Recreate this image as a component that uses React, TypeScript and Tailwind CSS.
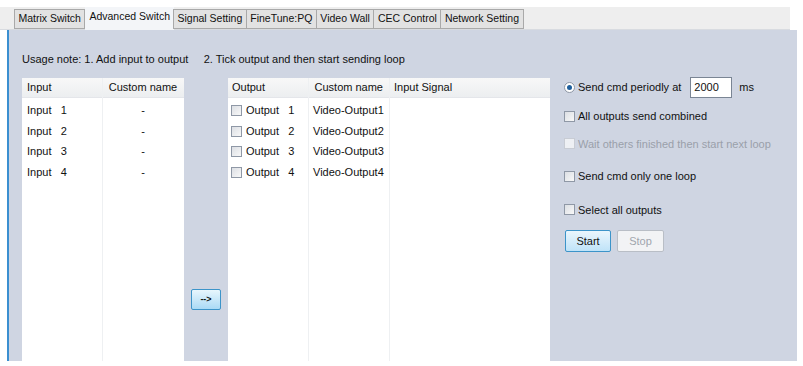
const font = { fontFamily: '"Liberation Sans", Arial, sans-serif' };

const tabs = ['Matrix Switch', 'Advanced Switch', 'Signal Setting', 'FineTune:PQ', 'Video Wall', 'CEC Control', 'Network Setting'];

function Box({ disabled }: { disabled?: boolean }) {
  return (
    <span
      className={`inline-block w-[11px] h-[11px] border shrink-0 ${
        disabled ? 'border-[#c8ccd4] bg-[#eef0f4]' : 'border-[#8f98a6] bg-gradient-to-br from-[#dcdfe4] to-[#f8f8f8]'
      }`}
    />
  );
}

export default function App() {
  return (
    <div className="w-[803px] h-[366px] bg-white text-[11px] text-[#111] pt-[7px] overflow-hidden" style={font}>
      {/* Tab strip */}
      <div className="w-[790px] h-[23px] bg-[#eeeeee] flex items-end pl-[14px] border-b border-[#d8dbe0]">
        {tabs.map((t) =>
          t === 'Advanced Switch' ? (
            <div key={t} className="h-[23px] px-[4px] flex items-center bg-[#f3f5f8] text-[10.5px] -mb-px pb-[3px]">
              {t}
            </div>
          ) : (
            <div key={t} className="h-[20px] px-[3.5px] flex items-center bg-[#e2e2e2] border border-[#a9a9a9] text-[10.5px] -ml-px first:ml-0">
              {t}
            </div>
          )
        )}
      </div>

      {/* Panel */}
      <div className="w-[790px] h-[331px] bg-[#cfd5e2] border-l-2 border-[#3a8fd0] ml-[7px] flex flex-col">
        <div className="h-[48px] pl-[13px] pt-[21px] text-[11px]">
          Usage note: 1. Add input to output&nbsp;&nbsp;&nbsp;&nbsp;&nbsp;2. Tick output and then start sending loop
        </div>
        <div className="flex flex-1">
          {/* Input list */}
          <div className="ml-[13px] w-[162px] bg-white flex flex-col relative">
            <div className="h-[20px] flex items-center bg-gradient-to-b from-[#f8f8f8] to-[#eceef0] border-b border-[#e4e6ea]">
              <span className="w-[80px] pl-[5px]">Input</span>
              <span className="flex-1 text-center">Custom name</span>
            </div>
            <div className="absolute left-[80px] top-0 bottom-0 w-px bg-[#eef0f2]" />
            <div className="pt-[2px]">
              {[1, 2, 3, 4].map((n) => (
                <div key={n} className="h-[20.7px] flex items-center">
                  <span className="w-[80px] pl-[5px]">Input&nbsp;&nbsp;&nbsp;{n}</span>
                  <span className="flex-1 text-center">-</span>
                </div>
              ))}
            </div>
          </div>

          {/* Arrow button */}
          <div className="w-[44px] flex justify-center pt-[211px]">
            <div className="w-[30px] h-[21px] rounded-[2px] border border-[#3c94c9] bg-gradient-to-b from-[#e8f6fd] to-[#a9daf5] flex items-center justify-center text-[9px] font-bold">
              --&gt;
            </div>
          </div>

          {/* Output list */}
          <div className="w-[322px] bg-white flex flex-col relative">
            <div className="h-[20px] flex items-center bg-gradient-to-b from-[#f8f8f8] to-[#eceef0] border-b border-[#e4e6ea]">
              <span className="w-[80px] pl-[4px]">Output</span>
              <span className="w-[81px] text-right pr-[6px]">Custom name</span>
              <span className="pl-[5px]">Input Signal</span>
            </div>
            <div className="absolute left-[80px] top-0 bottom-0 w-px bg-[#eef0f2]" />
            <div className="absolute left-[161px] top-0 bottom-0 w-px bg-[#eef0f2]" />
            <div className="pt-[2px]">
              {[1, 2, 3, 4].map((n) => (
                <div key={n} className="h-[20.7px] flex items-center">
                  <span className="w-[80px] pl-[3px] flex items-center gap-[4px]">
                    <Box />
                    Output&nbsp;&nbsp;&nbsp;{n}
                  </span>
                  <span className="pl-[5px]">Video-Output{n}</span>
                </div>
              ))}
            </div>
          </div>

          {/* Settings */}
          <div className="flex-1 pl-[14px] flex flex-col">
            <div className="flex items-center h-[22px] -mt-[2px]">
              <span className="w-[11px] h-[11px] rounded-full border border-[#8f98a6] bg-white flex items-center justify-center mr-[3px]">
                <span className="w-[5px] h-[5px] rounded-full bg-[#1f5f9c]" />
              </span>
              <span>Send cmd periodly at</span>
              <span className="ml-[9px] w-[42px] h-[21px] bg-white border border-[#7a8594] flex items-center pl-[3px]">2000</span>
              <span className="ml-[7px]">ms</span>
            </div>
            <div className="flex items-center gap-[3px] mt-[10px]">
              <Box />
              <span>All outputs send combined</span>
            </div>
            <div className="flex items-center gap-[3px] mt-[11px] text-[#9aa0aa]">
              <Box disabled />
              <span>Wait others finished then start next loop</span>
            </div>
            <div className="flex items-center gap-[3px] mt-[16px]">
              <Box />
              <span>Send cmd only one loop</span>
            </div>
            <div className="flex items-center gap-[3px] mt-[17px]">
              <Box />
              <span>Select all outputs</span>
            </div>
            <div className="flex gap-[6px] mt-[12px] ml-[1px]">
              <div className="w-[46px] h-[22px] rounded-[2px] border border-[#3c94c9] bg-gradient-to-b from-[#eaf6fd] to-[#bfe3f8] flex items-center justify-center">
                Start
              </div>
              <div className="w-[47px] h-[22px] rounded-[2px] border border-[#b9bec6] bg-[#f2f3f5] text-[#a0a5ad] flex items-center justify-center">
                Stop
              </div>
            </div>
          </div>
        </div>
      </div>
    </div>
  );
}
